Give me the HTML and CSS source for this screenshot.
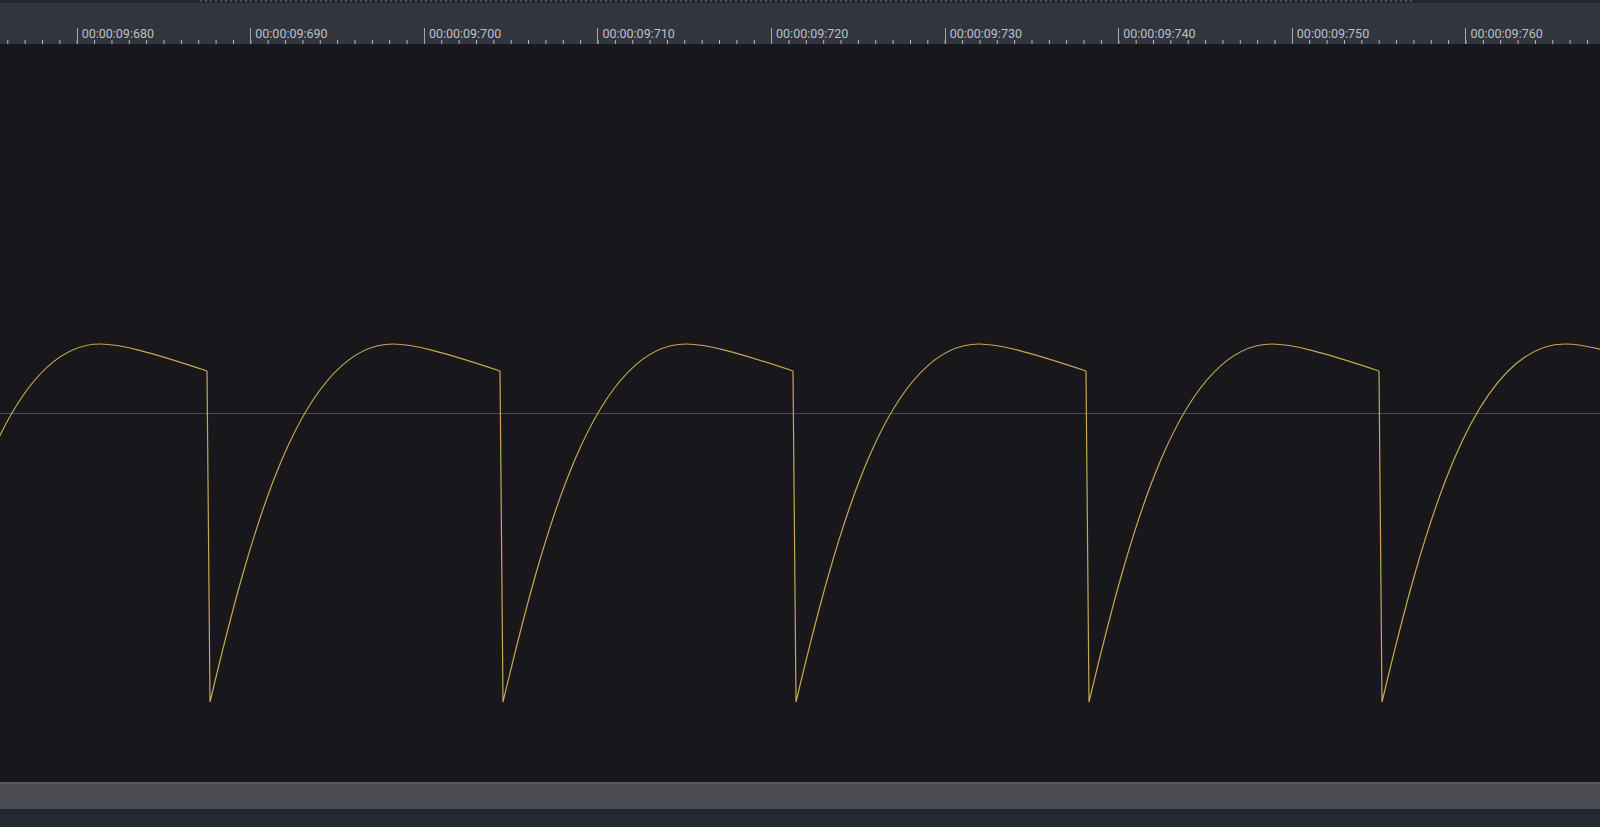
FILE: index.html
```html
<!DOCTYPE html>
<html>
<head>
<meta charset="utf-8">
<link rel="stylesheet" href="styles.css">
</head>
<body>
<div class="app">
  <div class="topstrip"><div class="dots"></div></div>
  <div class="ruler">
    <div class="major"><span>00:00:09:680</span></div>
    <div class="major"><span>00:00:09:690</span></div>
    <div class="major"><span>00:00:09:700</span></div>
    <div class="major"><span>00:00:09:710</span></div>
    <div class="major"><span>00:00:09:720</span></div>
    <div class="major"><span>00:00:09:730</span></div>
    <div class="major"><span>00:00:09:740</span></div>
    <div class="major"><span>00:00:09:750</span></div>
    <div class="major"><span>00:00:09:760</span></div>
  </div>
  <div class="wave">
    <svg class="wave-svg" width="1600" height="738" viewBox="0 44 1600 738">
      <defs>
        <path id="cyc" d="M0 371 L3 702 C44 530 94 344 186 344 C206 344 236 352 293 371"/>
      </defs>
      <line class="zero" x1="0" y1="413.5" x2="1600" y2="413.5"/>
      <g class="trace">
        <use href="#cyc" x="-86"/>
        <use href="#cyc" x="207"/>
        <use href="#cyc" x="500"/>
        <use href="#cyc" x="793"/>
        <use href="#cyc" x="1086"/>
        <use href="#cyc" x="1379"/>
      </g>
    </svg>
  </div>
  <div class="scrollbar"></div>
  <div class="statusbar"></div>
</div>
</body>
</html>
```

FILE: styles.css
```css
html, body {
  margin: 0;
  padding: 0;
  background: #17171c;
}

.app {
  width: 1600px;
  height: 827px;
  display: flex;
  flex-direction: column;
  overflow: hidden;
  font-family: Roboto, "Noto Sans", "Liberation Sans", sans-serif;
}

.topstrip {
  height: 3px;
  flex: 0 0 3px;
  background: #25262d;
  padding-left: 200px;
  box-sizing: border-box;
}

.dots {
  width: 1215px;
  height: 2px;
  background-image: repeating-linear-gradient(to right, rgba(150,152,160,0.35) 0 2px, transparent 2px 5px);
}

.ruler {
  height: 41px;
  flex: 0 0 41px;
  display: flex;
  align-items: flex-end;
  padding-left: 76.7px;
  box-sizing: border-box;
  background-color: #33353e;
  background-image: linear-gradient(to right, #b9bcc4 0 1.3px, transparent 1.3px);
  background-size: 17.36px 4px;
  background-repeat: repeat-x;
  background-position: 7.3px bottom;
}

.major {
  flex: 0 0 173.6px;
  height: 16px;
  box-sizing: border-box;
  border-left: 1.5px solid #a3a6ae;
  padding-left: 4px;
  font-size: 12.5px;
  line-height: 12px;
  color: #bcbfc9;
  white-space: nowrap;
}

.wave {
  flex: 0 0 738px;
  height: 738px;
  background: #17171c;
}

.wave-svg {
  display: block;
}

.zero {
  stroke: #4b4b52;
  stroke-width: 1.2;
}

.trace {
  fill: none;
  stroke: #c6a752;
  stroke-width: 1.2;
  stroke-linejoin: miter;
}

.scrollbar {
  flex: 0 0 27px;
  height: 27px;
  box-sizing: border-box;
  border-top: 2px solid #56575d;
  background: #4a4b51;
}

.statusbar {
  flex: 1 1 auto;
  background: #262831;
}
```
